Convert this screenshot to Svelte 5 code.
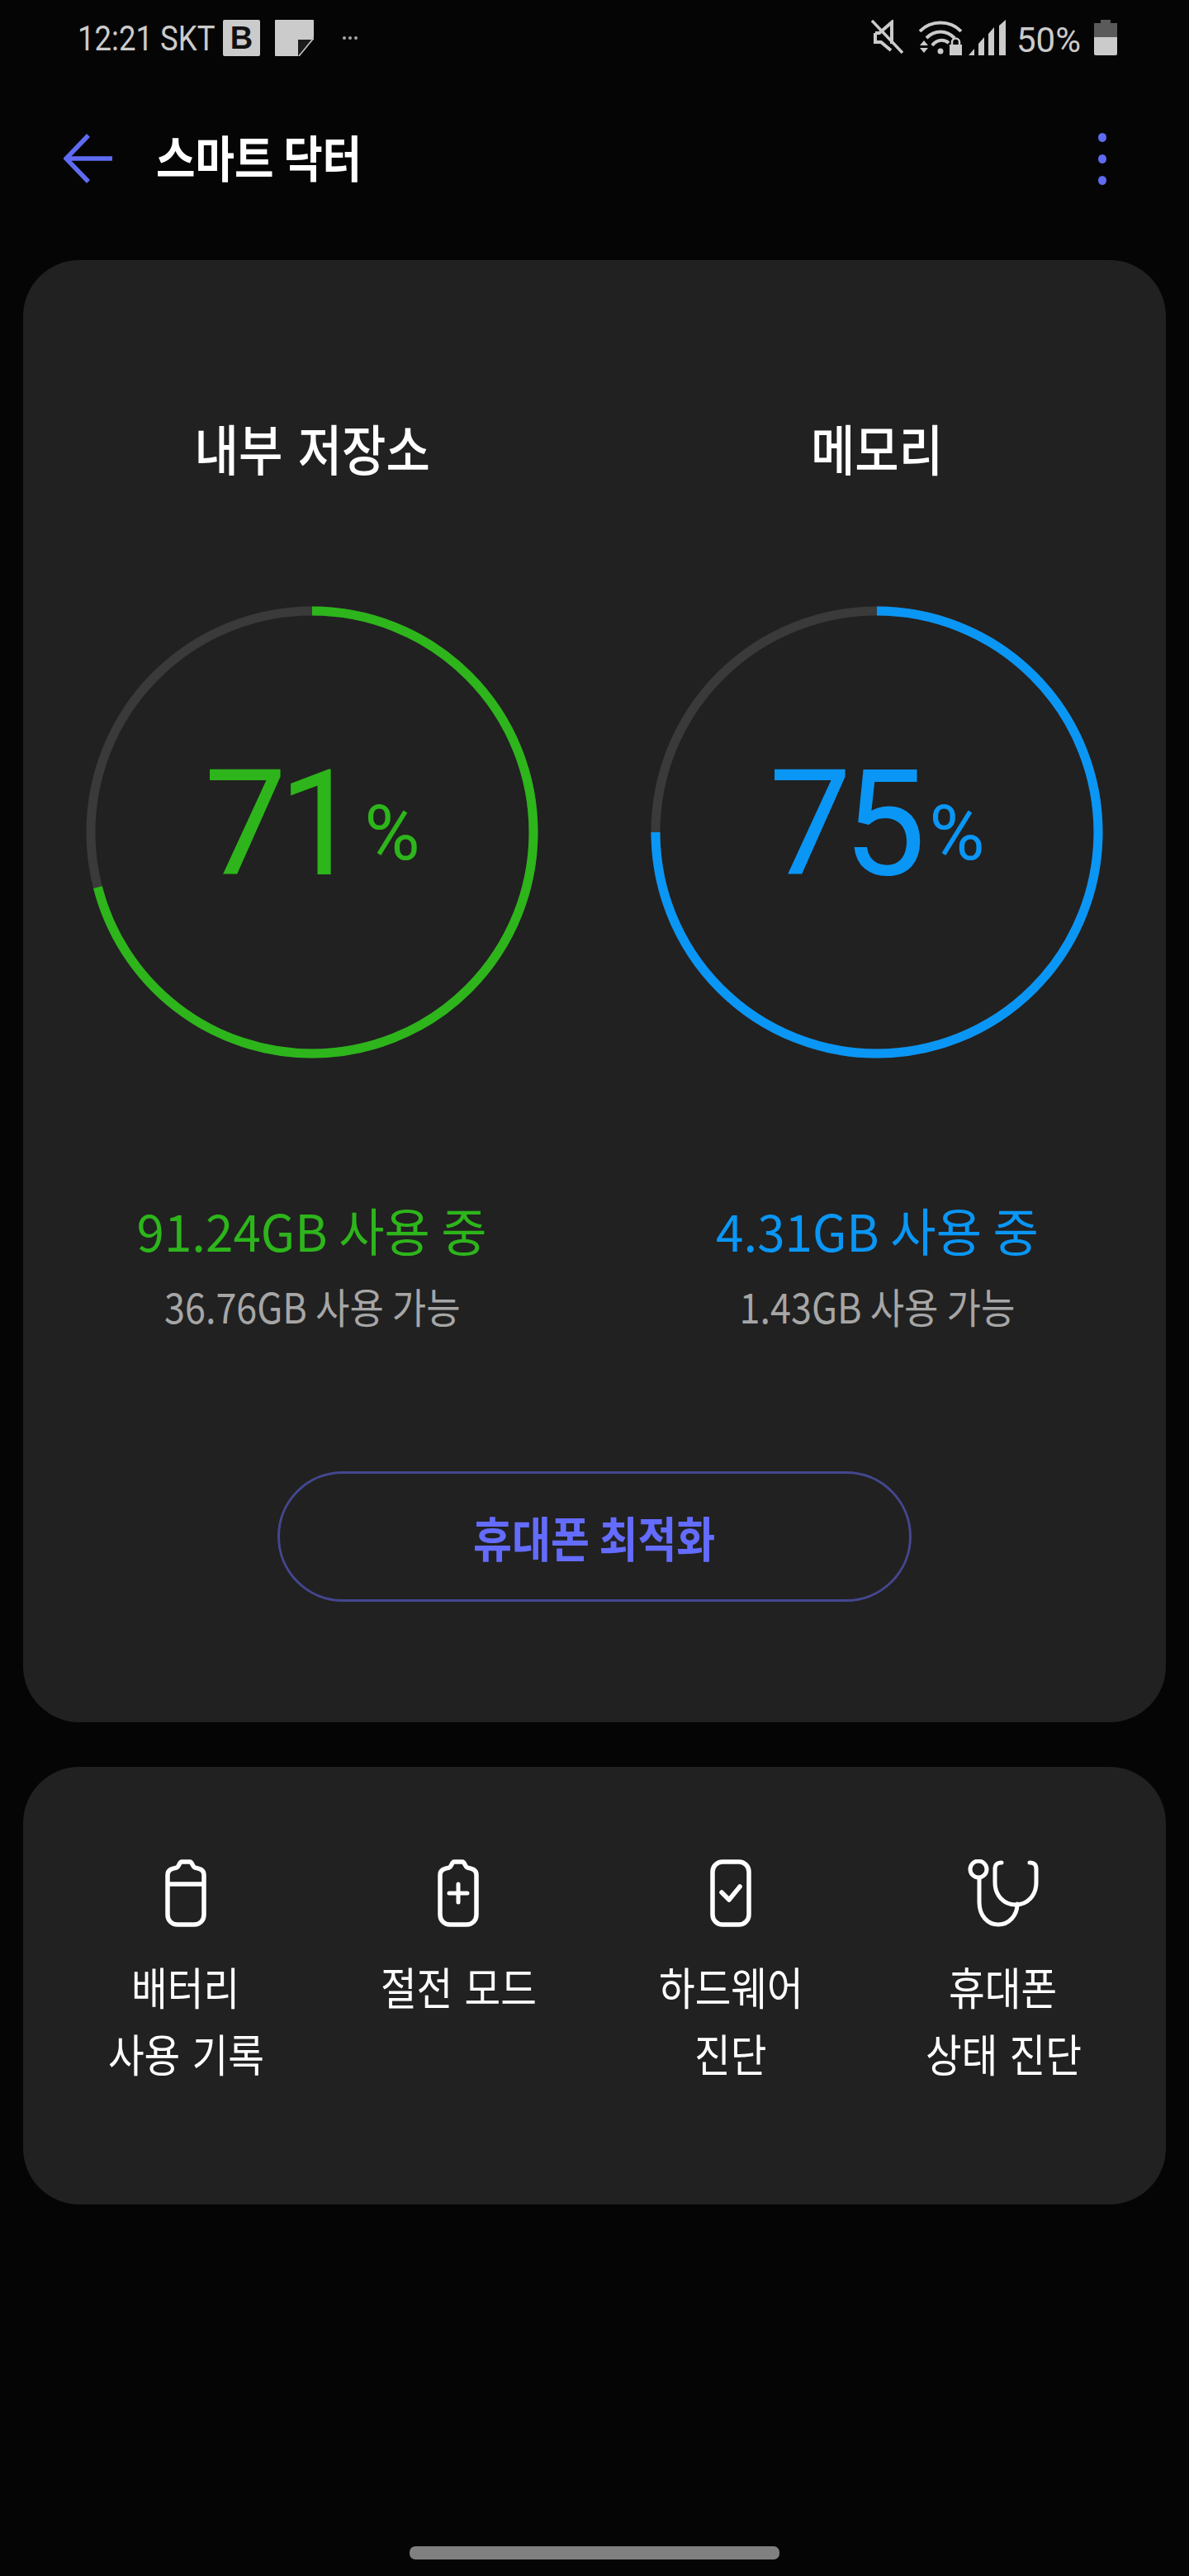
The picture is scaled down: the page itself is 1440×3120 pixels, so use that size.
<script>
  const gauges = [
    { title: "내부 저장소", pct: 71, used: "91.24GB 사용 중", free: "36.76GB 사용 가능", color: "#2db51b" },
    { title: "메모리", pct: 75, used: "4.31GB 사용 중", free: "1.43GB 사용 가능", color: "#0a96f5" },
  ];
</script>

<div class="screen">
  <header class="status">
    <div class="status__left">
      <span class="status__time"><span>12:21 SKT</span></span>
      <span class="status__b">B</span>
      <svg class="status__note" width="47" height="44" viewBox="0 0 47 44">
        <path d="M0 1a1 1 0 0 1 1-1h45a1 1 0 0 1 1 1v20L28 44H1a1 1 0 0 1-1-1z" fill="#cbcbcb" />
        <path d="M28 44V24h19z" fill="#1c1c1c" />
        <path d="M29 44L47 22" stroke="#cbcbcb" stroke-width="1.5" />
      </svg>
      <span class="status__more">
        <i></i><i></i><i></i>
      </span>
    </div>
    <div class="status__right">
      <svg width="40" height="41" viewBox="0 0 40 41" fill="none" stroke="#cbcbcb">
        <path d="M5 16h5l15-13v26M5 16v11h7l12 10" stroke-width="4" />
        <path d="M1 1l37 39" stroke-width="3.5" />
      </svg>
      <svg class="status__wifi" width="52" height="43" viewBox="0 0 52 43" fill="none" stroke="#cbcbcb" stroke-width="4">
        <path d="M1 14C14 0 38 0 51 14" />
        <path d="M9 22c10-10 24-10 34 0" />
        <path d="M16 31c5-7 14-8 20-3" />
        <circle cx="26" cy="38" r="3.5" fill="#cbcbcb" stroke="none" />
        <path d="M1 31l5-6 5 6zM1 34l5 6 5-6z" fill="#cbcbcb" stroke="none" />
        <path d="M37 43V30h15v13z" fill="#cbcbcb" stroke="none" />
        <path d="M40 30v-3a4.500 4.500 0 0 1 9 0v3" stroke-width="2.500" />
      </svg>
      <svg class="status__signal" width="45" height="43" viewBox="0 0 45 43" fill="#cbcbcb">
        <path d="M0 43l7-8v8zM12 43V29l7-8v22zM24 43V17l7-8v34zM37 43V7l8-7v43z" />
      </svg>
      <span class="status__pct">50%</span>
      <svg class="status__battery" width="28" height="43" viewBox="0 0 28 43">
        <path d="M8 0h12v4h8v17H0V4h8z" fill="#5a5a5a" />
        <path d="M0 21h28v20a2 2 0 0 1-2 2H2a2 2 0 0 1-2-2z" fill="#cbcbcb" />
      </svg>
    </div>
  </header>

  <div class="appbar">
    <svg class="appbar__back" width="60" height="60" viewBox="0 0 60 60" fill="none" stroke="#5f6bf2" stroke-width="5.500">
      <path d="M59 30H3M30 2L3 30l0 0L30 58" />
    </svg>
    <h1 class="appbar__title"><span>스마트 닥터</span></h1>
    <div class="appbar__menu"><i></i><i></i><i></i></div>
  </div>

  <section class="card card--gauges">
    <div class="gauges">
      {#each gauges as g}
        <div class="gauge">
          <h2 class="gauge__title"><span>{g.title}</span></h2>
          <div class="ring">
            <svg width="548" height="548" viewBox="0 0 548 548" fill="none" stroke-width="11">
              <circle cx="274" cy="274" r="268" stroke="#3a3a3a" />
              <circle
                cx="274"
                cy="274"
                r="268"
                stroke={g.color}
                pathLength="100"
                stroke-dasharray="{g.pct} 100"
                transform="rotate(-90 274 274)"
              />
            </svg>
            <div class="ring__label" style="color: {g.color}">
              <span class="ring__num">{g.pct}</span><span class="ring__pct">%</span>
            </div>
          </div>
          <p class="gauge__used" style="color: {g.color}"><span>{g.used}</span></p>
          <p class="gauge__free"><span>{g.free}</span></p>
        </div>
      {/each}
    </div>
    <button type="button" class="optimize"><span>휴대폰 최적화</span></button>
  </section>

  <section class="card card--tools">
    <div class="tool">
      <svg width="50" height="82" viewBox="0 0 50 82" fill="none" stroke="#fff" stroke-width="5.500">
        <path d="M20 3h10c3 0 3 6 6 7 5 1 11 2 11 9v48c0 7-5 12-12 12H15C8 79 3 74 3 67V19c0-7 6-8 11-9 3-1 3-7 6-7z" />
        <path d="M3 30H47" />
      </svg>
      <p><span>배터리</span><br /><span>사용 기록</span></p>
    </div>
    <div class="tool">
      <svg width="50" height="82" viewBox="0 0 50 82" fill="none" stroke="#fff" stroke-width="5.500" stroke-linecap="round">
        <path d="M20 3h10c3 0 3 6 6 7 5 1 11 2 11 9v48c0 7-5 12-12 12H15C8 79 3 74 3 67V19c0-7 6-8 11-9 3-1 3-7 6-7z" />
        <path d="M14 41H36M25 30V52" stroke-width="5" />
      </svg>
      <p><span>절전 모드</span></p>
    </div>
    <div class="tool">
      <svg width="50" height="82" viewBox="0 0 50 82" fill="none" stroke="#fff" stroke-width="5.500" stroke-linecap="round" stroke-linejoin="round">
        <rect x="3" y="3" width="44" height="76" rx="12" />
        <path d="M14 40l9 9 13-16" />
      </svg>
      <p><span>하드웨어</span><br /><span>진단</span></p>
    </div>
    <div class="tool">
      <svg width="86" height="82" viewBox="0 0 86 82" fill="none" stroke="#fff" stroke-width="5" stroke-linecap="round">
        <circle cx="13" cy="12" r="10" />
        <path d="M14 23V52C14 68 24 79 37 79C50 79 60 68 60 54" />
        <path d="M41 4C35 4 33 7 33 12V28C33 44 44 55 58 55C72 55 83 44 83 28V12C83 7 81 4 75 4" />
      </svg>
      <p><span>휴대폰</span><br /><span>상태 진단</span></p>
    </div>
  </section>

  <div class="home-pill"></div>
</div>

<style>
  :global(body) {
    margin: 0;
    background: #050505;
  }

  .screen {
    width: 1440px;
    height: 3120px;
    font-family: "Noto Sans CJK KR", "Noto Sans", sans-serif;
    color: #fff;
    overflow: hidden;
  }

  .status {
    height: 92px;
    box-sizing: border-box;
    padding: 24px 87px 0 94px;
    display: flex;
    justify-content: space-between;
    color: #cbcbcb;
    font-family: Roboto, sans-serif;
  }

  .status__left,
  .status__right {
    display: flex;
    align-items: flex-start;
  }

  .status__time {
    width: 166px;
    height: 44px;
    font-size: 43px;
    line-height: 44px;
    white-space: nowrap;
  }

  .status__time span {
    display: inline-block;
    transform: scaleX(0.85);
    transform-origin: left center;
  }

  .status__b {
    width: 45px;
    height: 44px;
    margin-left: 10px;
    background: #cbcbcb;
    border-radius: 2px;
    color: #111;
    font: 700 38px/44px "Liberation Sans", sans-serif;
    text-align: center;
  }

  .status__note {
    margin-left: 18px;
  }

  .status__more {
    margin: 20px 0 0 35px;
    display: flex;
    gap: 3px;
  }

  .status__more i {
    width: 4px;
    height: 4px;
    border-radius: 50%;
    background: #a8a8a8;
  }

  .status__wifi {
    margin-left: 18px;
  }

  .status__signal {
    margin-left: 8px;
  }

  .status__pct {
    margin: 3px 0 0 13px;
    width: 77px;
    font-size: 42px;
    line-height: 44px;
  }

  .status__battery {
    margin-left: 17px;
  }

  .appbar {
    height: 200px;
    padding: 0 100px 0 77px;
    display: flex;
    align-items: center;
  }

  .appbar__back {
    width: 60px;
    flex: none;
  }

  .appbar__title {
    margin: -6px 0 0 52px;
    font-size: 60px;
    font-weight: 700;
    line-height: 80px;
    white-space: nowrap;
  }

  .appbar__title span {
    display: inline-block;
    transform: scaleX(0.86);
    transform-origin: left center;
  }

  .appbar__menu {
    margin-left: auto;
    display: flex;
    flex-direction: column;
    gap: 15px;
  }

  .appbar__menu i {
    width: 10px;
    height: 11px;
    border-radius: 50%;
    background: #5f6bf2;
  }

  .card {
    margin: 0 28px;
    background: #212121;
    border-radius: 68px;
  }

  .card--gauges {
    margin-top: 23px;
    padding: 186px 8px 146px;
    display: flex;
    flex-direction: column;
    align-items: center;
  }

  .gauges {
    display: grid;
    grid-template-columns: 684px 684px;
  }

  .gauge {
    display: flex;
    flex-direction: column;
    align-items: center;
  }

  .gauge__title {
    margin: 0;
    font-size: 66px;
    font-weight: 500;
    line-height: 80px;
    white-space: nowrap;
    word-spacing: 6px;
  }

  .gauge__title span {
    display: inline-block;
    transform: scaleX(0.88);
  }

  .ring {
    margin-top: 153px;
    display: grid;
    place-items: center;
  }

  .ring svg {
    grid-area: 1 / 1;
    display: block;
  }

  .ring__label {
    grid-area: 1 / 1;
    display: flex;
    align-items: baseline;
    font-family: Roboto, sans-serif;
    margin-top: -20px;
  }

  .ring__num {
    font-size: 178px;
    line-height: 200px;
    letter-spacing: -10px;
  }

  .ring__pct {
    margin-left: 14px;
    font-size: 92px;
    line-height: 1;
    position: relative;
    top: -18px;
  }

  .gauge__used {
    margin: 167px 0 0;
    font-size: 62px;
    line-height: 80px;
    white-space: nowrap;
  }

  .gauge__used span {
    display: inline-block;
    transform: scaleX(0.97);
  }

  .gauge__free {
    margin: 22px 0 0;
    color: #a6a6a6;
    font-size: 50px;
    line-height: 60px;
    white-space: nowrap;
  }

  .gauge__free span {
    display: inline-block;
    transform: scaleX(0.9);
  }

  .optimize {
    margin-top: 171px;
    width: 768px;
    height: 158px;
    background: none;
    border: 3px solid #44478f;
    border-radius: 79px;
    color: #646cff;
    font-family: inherit;
    font-size: 58px;
    font-weight: 700;
    padding: 0;
  }

  .optimize span {
    display: inline-block;
    transform: scaleX(0.88);
  }

  .card--tools {
    margin-top: 54px;
    height: 530px;
    box-sizing: border-box;
    padding: 112px 32px 0;
    display: grid;
    grid-template-columns: repeat(4, 330px);
    align-items: start;
  }

  .tool {
    display: flex;
    flex-direction: column;
    align-items: center;
  }

  .tool svg {
    display: block;
  }

  .tool p {
    margin: 31px 0 0;
    font-size: 54px;
    line-height: 81px;
    text-align: center;
    white-space: nowrap;
    word-spacing: 4px;
  }

  .tool p span {
    display: inline-block;
    transform: scaleX(0.88);
  }

  .home-pill {
    margin: 414px auto 0;
    width: 448px;
    height: 16px;
    border-radius: 7px;
    background: #808080;
  }
</style>
